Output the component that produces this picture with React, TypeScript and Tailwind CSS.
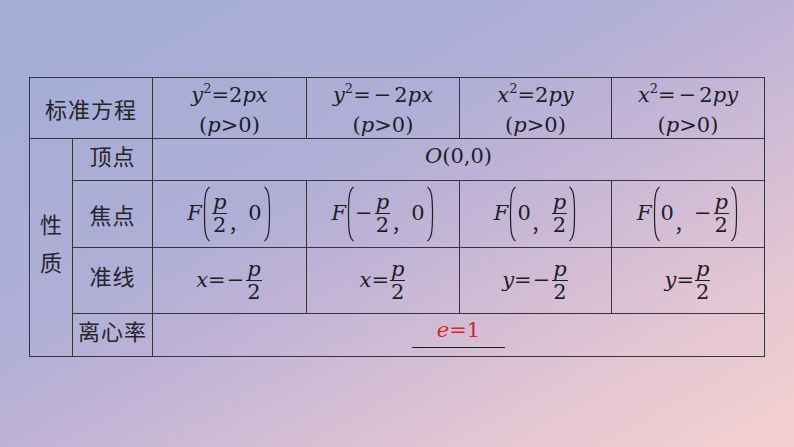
import React from "react";

const INK = "#1d1d26";
const M = "[font-family:DejaVu_Serif,serif] text-[21px] text-[#1d1d26]";
const C = "[font-family:Noto_Sans_CJK_SC,sans-serif] text-[22px] text-[#24242c]";
const cell = "border-r border-b border-[#34343e] flex items-center justify-center";

const I = ({ children }: { children: React.ReactNode }) => <span className="italic">{children}</span>;

const Sup = ({ children }: { children: React.ReactNode }) => (
  <span className="relative -top-[9px] text-[13px] leading-none align-baseline not-italic">{children}</span>
);

const Eq = () => <span>=</span>;
const Minus = ({ m = "mx-[3px]" }: { m?: string }) => <span className={m}>−</span>;

const Frac = ({ n, d }: { n: React.ReactNode; d: React.ReactNode }) => (
  <span className="inline-flex flex-col items-center mx-[1px]">
    <span className="leading-[21px] px-[1px]">{n}</span>
    <span className="h-px w-full bg-[#1d1d26]" />
    <span className="leading-[22px]">{d}</span>
  </span>
);

const LParen = () => (
  <svg width="9" height="56" viewBox="0 0 9 56" className="shrink-0">
    <path d="M7.5 1 C3.5 4 2.5 10 2.5 28 C2.5 46 3.5 52 7.5 55" fill="none" stroke={INK} strokeWidth="1.2" />
  </svg>
);
const RParen = () => (
  <svg width="9" height="56" viewBox="0 0 9 56" className="shrink-0">
    <path d="M1.5 1 C5.5 4 6.5 10 6.5 28 C6.5 46 5.5 52 1.5 55" fill="none" stroke={INK} strokeWidth="1.2" />
  </svg>
);

const Comma = () => (
  <span className="[font-family:Noto_Sans_CJK_SC,sans-serif] text-[20px] w-[20px] self-end mb-[8px] leading-none">，</span>
);

const P = () => <I>p</I>;

const Cond = () => (
  <div className="leading-[30px]">
    (<I>p</I>&gt;0)
  </div>
);

const Head = ({ v, minus, rhs }: { v: string; minus?: boolean; rhs: string }) => (
  <div className={`${cell} ${M} pt-[3px]`}>
    <div className="flex flex-col items-center">
      <div className="leading-[30px]">
        <I>{v}</I>
        <Sup>2</Sup>
        <Eq />
        {minus && <Minus />}2<I>{rhs}</I>
      </div>
      <Cond />
    </div>
  </div>
);

export default function App() {
  return (
    <div className="w-[794px] h-[447px] overflow-hidden bg-[linear-gradient(to_bottom_right,#a2aed5_0%,#afaed6_38%,#c4b5d6_55%,#e2c5d3_78%,#f5d0cf_100%)] pt-[77px] pl-[29px]">
      <div className="grid grid-cols-[43px_80px_154px_153px_152px_153px] grid-rows-[61px_42px_67px_66px_43px] w-[736px] border-l border-t border-[#34343e]">
        {/* Row 1 */}
        <div className={`${cell} col-span-2 ${C} tracking-[1px]`}>标准方程</div>
        <Head v="y" rhs="px" />
        <Head v="y" minus rhs="px" />
        <Head v="x" rhs="py" />
        <Head v="x" minus rhs="py" />

        {/* 性质 */}
        <div className={`${cell} row-span-4 flex-col ${C} leading-[38px] pb-[12px]`}>
          <span>性</span>
          <span>质</span>
        </div>

        {/* Row 2 */}
        <div className={`${cell} ${C} leading-[24px] pb-[10px] tracking-[1px]`}>顶点</div>
        <div className={`${cell} col-span-4 ${M} leading-[28px] pb-[8px]`}>
          <span>
            <I>O</I>(0,0)
          </span>
        </div>

        {/* Row 3 */}
        <div className={`${cell} ${C} leading-[24px] tracking-[1px]`}>焦点</div>
        <div className={`${cell} ${M}`}>
          <div className="flex items-center">
            <I>F</I>
            <LParen />
            <Frac n={<P />} d="2" />
            <Comma />
            <span className="mr-[1px]">0</span>
            <RParen />
          </div>
        </div>
        <div className={`${cell} ${M}`}>
          <div className="flex items-center">
            <I>F</I>
            <LParen />
            <span className="mr-[1px]">−</span>
            <Frac n={<P />} d="2" />
            <Comma />
            <span className="mr-[1px]">0</span>
            <RParen />
          </div>
        </div>
        <div className={`${cell} ${M}`}>
          <div className="flex items-center">
            <I>F</I>
            <LParen />
            <span>0</span>
            <Comma />
            <Frac n={<P />} d="2" />
            <RParen />
          </div>
        </div>
        <div className={`${cell} ${M}`}>
          <div className="flex items-center">
            <I>F</I>
            <LParen />
            <span>0</span>
            <Comma />
            <span className="mr-[1px]">−</span>
            <Frac n={<P />} d="2" />
            <RParen />
          </div>
        </div>

        {/* Row 4 */}
        <div className={`${cell} ${C} leading-[24px] pb-[12px] tracking-[1px]`}>准线</div>
        <div className={`${cell} ${M}`}>
          <div className="flex items-center">
            <I>x</I>
            <Eq />
            <Minus m="mx-[1px]" />
            <Frac n={<P />} d="2" />
          </div>
        </div>
        <div className={`${cell} ${M}`}>
          <div className="flex items-center">
            <I>x</I>
            <Eq />
            <Frac n={<P />} d="2" />
          </div>
        </div>
        <div className={`${cell} ${M}`}>
          <div className="flex items-center">
            <I>y</I>
            <Eq />
            <Minus m="mx-[1px]" />
            <Frac n={<P />} d="2" />
          </div>
        </div>
        <div className={`${cell} ${M}`}>
          <div className="flex items-center">
            <I>y</I>
            <Eq />
            <Frac n={<P />} d="2" />
          </div>
        </div>

        {/* Row 5 */}
        <div className={`${cell} ${C} leading-[22px] pb-[10px] tracking-[1px]`}>离心率</div>
        <div className={`border-r border-b border-[#34343e] col-span-4 flex flex-col items-center justify-start pt-[3px] ${M}`}>
          <span className="leading-[26px] text-[#de1f2f]">
            <I>e</I>
            <Eq />1
          </span>
          <span className="mt-[4px] h-px w-[93px] bg-[#1d1d26]" />
        </div>
      </div>
    </div>
  );
}
